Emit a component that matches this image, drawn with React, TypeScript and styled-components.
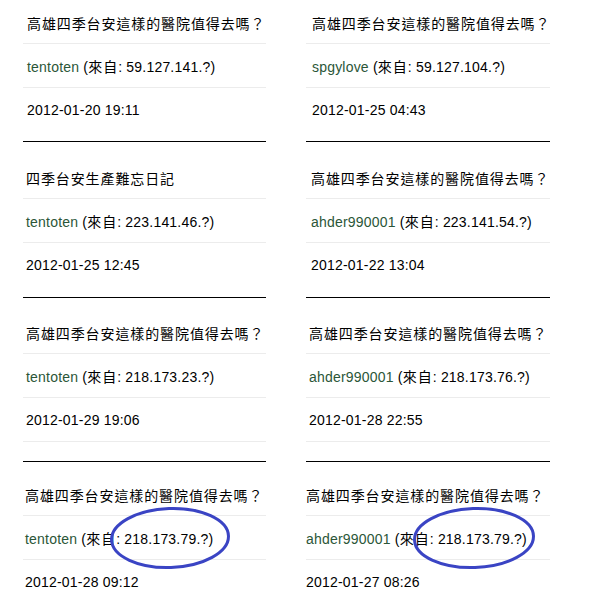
import styled, { createGlobalStyle } from 'styled-components';

const GlobalStyle = createGlobalStyle`
    html, body {
        margin: 0;
        padding: 0;
        background: #fff;
    }
    body {
        font-family: 'Liberation Sans', Arial, 'Noto Sans CJK TC', sans-serif;
        font-size: 14px;
        letter-spacing: 0.2px;
        color: #000;
    }
`;

type Post = {
    title: string;
    user: string;
    ip: string;
    date: string;
    inset: number;
    padTop: number;
    padBottom: number;
    closed?: boolean;
    mark?: { left: number; width: number };
};

const leftPosts: Post[] = [
    { title: '高雄四季台安這樣的醫院值得去嗎？', user: 'tentoten', ip: '59.127.141.?', date: '2012-01-20 19:11', inset: 4, padTop: 0, padBottom: 10 },
    { title: '四季台安生產難忘日記', user: 'tentoten', ip: '223.141.46.?', date: '2012-01-25 12:45', inset: 3, padTop: 13, padBottom: 11 },
    { title: '高雄四季台安這樣的醫院值得去嗎？', user: 'tentoten', ip: '218.173.23.?', date: '2012-01-29 19:06', inset: 3, padTop: 12, padBottom: 19, closed: true },
    { title: '高雄四季台安這樣的醫院值得去嗎？', user: 'tentoten', ip: '218.173.79.?', date: '2012-01-28 09:12', inset: 2, padTop: 10, padBottom: 0, mark: { left: 87, width: 120 } },
];

const rightPosts: Post[] = [
    { title: '高雄四季台安這樣的醫院值得去嗎？', user: 'spgylove', ip: '59.127.104.?', date: '2012-01-25 04:43', inset: 6, padTop: 0, padBottom: 10 },
    { title: '高雄四季台安這樣的醫院值得去嗎？', user: 'ahder990001', ip: '223.141.54.?', date: '2012-01-22 13:04', inset: 5, padTop: 13, padBottom: 11 },
    { title: '高雄四季台安這樣的醫院值得去嗎？', user: 'ahder990001', ip: '218.173.76.?', date: '2012-01-28 22:55', inset: 3, padTop: 12, padBottom: 19, closed: true },
    { title: '高雄四季台安這樣的醫院值得去嗎？', user: 'ahder990001', ip: '218.173.79.?', date: '2012-01-27 08:26', inset: 0, padTop: 10, padBottom: 0, mark: { left: 107, width: 122 } },
];

const Page = styled.div`
    display: grid;
    grid-template-columns: 243px 244px;
    column-gap: 40px;
    padding-left: 23px;
    width: 600px;
    height: 599px;
    overflow: hidden;
    box-sizing: border-box;
`;

const Column = styled.div`
    display: flex;
    flex-direction: column;
`;

const Card = styled.section<{ $padTop: number; $padBottom: number; $last: boolean }>`
    padding-top: ${(p) => p.$padTop}px;
    padding-bottom: ${(p) => p.$padBottom}px;
    border-bottom: ${(p) => (p.$last ? 'none' : '1px solid #000')};
`;

const Row = styled.div<{ $inset: number; $divider: boolean }>`
    position: relative;
    display: flex;
    align-items: center;
    height: 43px;
    padding-left: ${(p) => p.$inset}px;
    border-bottom: ${(p) => (p.$divider ? '1px solid #ececec' : 'none')};
    white-space: nowrap;
`;

const Title = styled.span`
    letter-spacing: 0.9px;
    padding-top: 2px;
`;

const Name = styled.span`
    color: #2b5638;
`;

const Han = styled.span`
    letter-spacing: 1px;
`;

const Stamp = styled.span`
    color: #000;
`;

const Circle = styled.svg<{ $left: number }>`
    position: absolute;
    left: ${(p) => p.$left}px;
    top: -9px;
    height: 62px;
    transform: rotate(-2deg);
    pointer-events: none;
    overflow: visible;
`;

const Mark = ({ left, width }: { left: number; width: number }) => (
    <Circle $left={left} width={width} viewBox={`0 0 ${width} 62`}>
        <ellipse
            cx={width / 2}
            cy={31}
            rx={width / 2 - 1.5}
            ry={29.5}
            fill="none"
            stroke="#3a44c4"
            strokeWidth={3}
        />
    </Circle>
);

const PostList = ({ posts }: { posts: Post[] }) => (
    <Column>
        {posts.map((post, i) => (
            <Card
                key={i}
                $padTop={post.padTop}
                $padBottom={post.padBottom}
                $last={i === posts.length - 1}
            >
                <Row $inset={post.inset} $divider>
                    <Title>{post.title}</Title>
                </Row>
                <Row $inset={post.inset} $divider>
                    <span>
                        <Name>{post.user}</Name> (<Han>來自</Han>: {post.ip})
                    </span>
                    {post.mark && <Mark left={post.mark.left} width={post.mark.width} />}
                </Row>
                <Row $inset={post.inset} $divider={!!post.closed}>
                    <Stamp>{post.date}</Stamp>
                </Row>
            </Card>
        ))}
    </Column>
);

const App = () => (
    <>
        <GlobalStyle />
        <Page>
            <PostList posts={leftPosts} />
            <PostList posts={rightPosts} />
        </Page>
    </>
);

export default App;
